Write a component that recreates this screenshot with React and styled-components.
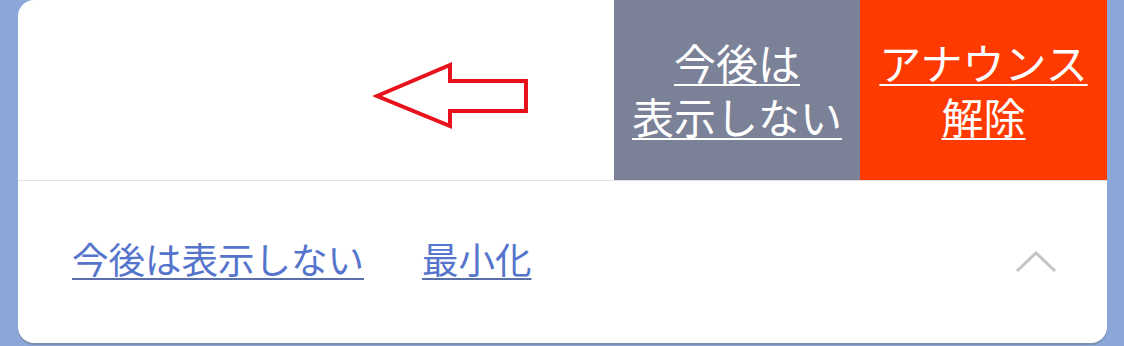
import React from 'react'
import styled, {createGlobalStyle} from 'styled-components'

const GlobalStyle = createGlobalStyle`
    html, body {
        margin: 0;
        padding: 0;
        background: #8aa7d7;
        font-family: "Noto Sans CJK JP", "Noto Sans", sans-serif;
    }
`;

const Page = styled.div`
    width: 1124px;
    height: 346px;
    overflow: hidden;
    padding-left: 18px;
    box-sizing: border-box;
`;

const Card = styled.div`
    width: 1089px;
    height: 343px;
    background: #fff;
    border-radius: 16px;
    display: flex;
    flex-direction: column;
    box-shadow: 0 2px 0 #7d8eb0;
`;

const TopSection = styled.div`
    height: 180px;
    display: flex;
    border-bottom: 1px solid #e2e2e2;
`;

const ArrowArea = styled.div`
    flex: 1;
    display: flex;
    align-items: center;
    padding: 12px 0 0 355px;
`;

const ActionButton = styled.div`
    width: ${p => p.$width}px;
    background: ${p => p.$color};
    color: #fff;
    display: flex;
    flex-direction: column;
    align-items: center;
    justify-content: center;
    font-size: 42px;
    line-height: 54px;
    padding-bottom: 2px;
    box-sizing: border-box;
    span {
        text-decoration: underline;
        text-decoration-thickness: 2px;
        text-underline-offset: 4px;
    }
`;

const BottomSection = styled.div`
    flex: 1;
    display: flex;
    align-items: center;
    padding: 0 50px 0 54px;
    gap: 58px;
`;

const Link = styled.span`
    color: #5574cc;
    font-size: 36.5px;
    text-decoration: underline;
    text-decoration-color: #5a6fa8;
    text-decoration-thickness: 2px;
    text-underline-offset: 4px;
    padding-bottom: 8px;
`;

const Chevron = styled.svg`
    margin-left: auto;
`;

const Arrow = () => (
    <svg width="160" height="70" viewBox="373 62 160 70">
        <polygon
            points="377,97 450,66 450,82 526,82 526,112 450,112 450,127"
            fill="none"
            stroke="#e8121c"
            strokeWidth="4"
            strokeLinejoin="miter"/>
    </svg>
)

const App = () => {
    return (
        <>
            <GlobalStyle/>
            <Page>
                <Card>
                    <TopSection>
                        <ArrowArea>
                            <Arrow/>
                        </ArrowArea>
                        <ActionButton $width={246} $color="#7b8197">
                            <span>今後は</span>
                            <span>表示しない</span>
                        </ActionButton>
                        <ActionButton $width={247} $color="#ff3a00">
                            <span>アナウンス</span>
                            <span>解除</span>
                        </ActionButton>
                    </TopSection>
                    <BottomSection>
                        <Link>今後は表示しない</Link>
                        <Link>最小化</Link>
                        <Chevron width="42" height="26" viewBox="0 0 42 26">
                            <polyline points="2,22 21,4 40,22" fill="none" stroke="#c4c4c4" strokeWidth="3"/>
                        </Chevron>
                    </BottomSection>
                </Card>
            </Page>
        </>
    )
}
export default App
